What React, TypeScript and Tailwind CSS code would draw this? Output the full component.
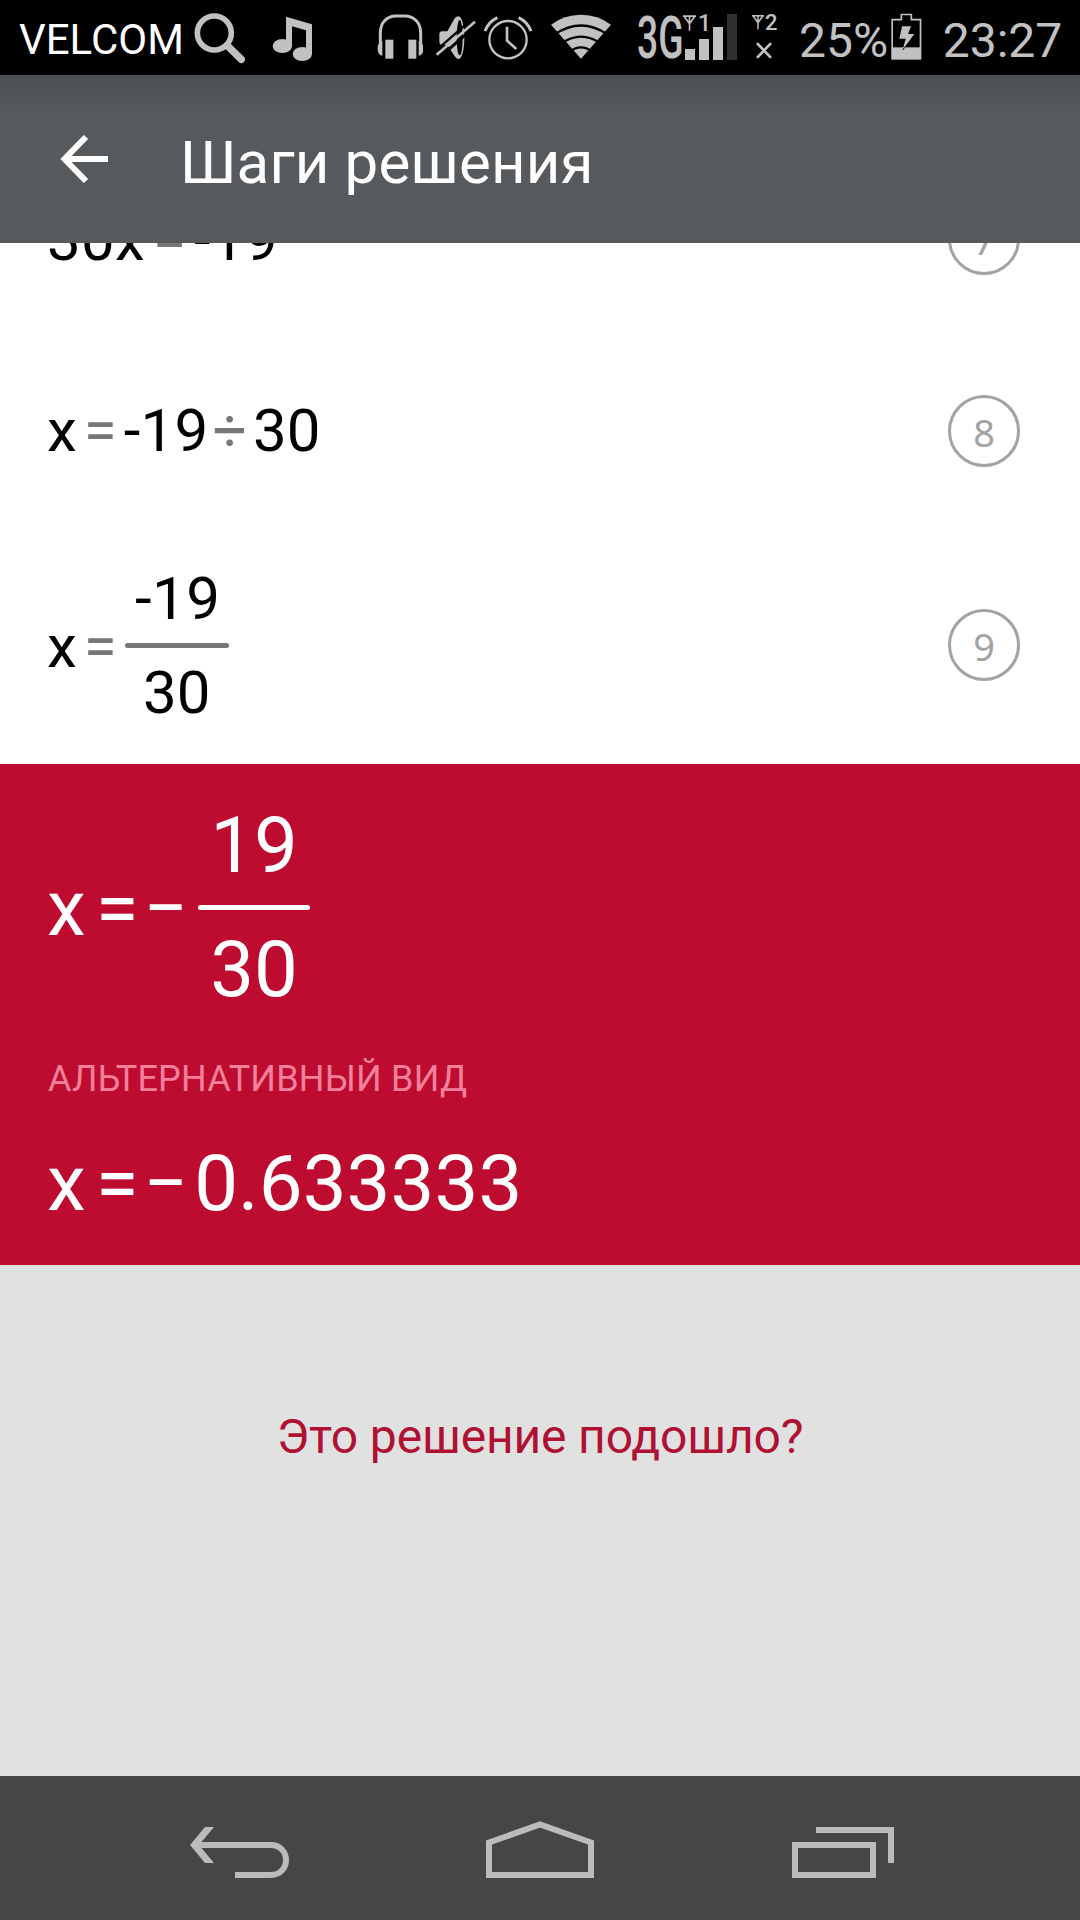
import React from 'react'

interface StepRowProps {
  step: number
  className?: string
  children: React.ReactNode
}

const ICON = '#c1c1c1'

const Antenna: React.FC<{ className?: string }> = ({ className = '' }) => (
  <svg viewBox="0 0 40 48" className={className} fill="none" stroke={ICON} strokeWidth="5">
    <path d="M0 3H40M20 3V48M4 4L19 25M36 4L21 25" />
  </svg>
)

const StatusBar = () => (
  <div className="flex h-[75px] shrink-0 items-start bg-black text-[#c1c1c1]">
    <span className="ml-[19px] mt-[16px] w-[163px] whitespace-nowrap text-[42px] leading-[48px] text-white">VELCOM</span>

    {/* search */}
    <svg viewBox="580 36 160 156" className="ml-[11px] mt-3 h-[52px] w-[53.3px] shrink-0" fill="none" stroke={ICON}>
      <circle cx="644" cy="99" r="51" strokeWidth="17" />
      <path d="M683 137L725 178" strokeWidth="22" strokeLinecap="round" />
    </svg>

    {/* music */}
    <svg viewBox="816 48 126 138" className="ml-[25.7px] mt-4 h-[46px] w-[42px] shrink-0" fill={ICON}>
      <path d="M858 50L936 73V162H918V91L876 79V138H858Z" />
      <ellipse cx="847" cy="138" rx="29" ry="21" />
      <ellipse cx="907" cy="162" rx="29" ry="21" />
    </svg>

    {/* headphones */}
    <svg viewBox="50 40 140 140" className="ml-[62.7px] mt-[13.3px] h-[46.7px] w-[46.7px] shrink-0">
      <path d="M60 135V100C60 66 82 49 106 49H134C158 49 181 66 181 100V135" fill="none" stroke={ICON} strokeWidth="9" />
      <path d="M66 124V168C54 166 52 156 52 146C52 136 56 126 66 124ZM175 124V168C187 166 189 156 189 146C189 136 185 126 175 124Z" fill={ICON} />
      <rect x="75" y="120" width="24" height="57" fill={ICON} />
      <rect x="144" y="120" width="24" height="57" fill={ICON} />
    </svg>

    {/* muted speaker */}
    <svg viewBox="225 46 125 136" className="ml-[11.6px] mt-[15.3px] h-[45.3px] w-[41.7px] shrink-0">
      <path d="M238 104Q238 96 246 95H262L284 56Q289 50 295 50C306 50 313 78 313 114C313 150 306 178 295 178Q289 178 284 170L262 136H246Q238 135 238 126Z" fill={ICON} />
      <ellipse cx="299" cy="114" rx="9" ry="53" fill="black" />
      <path d="M222 158L338 56" stroke="black" strokeWidth="7" />
      <path d="M238 174L352 74" stroke="black" strokeWidth="9" />
      <path d="M230 165L345 66" stroke={ICON} strokeWidth="8" />
    </svg>

    {/* alarm */}
    <svg viewBox="370 44 150 136" className="ml-[6.7px] mt-[14.7px] h-[45.3px] w-[50px] shrink-0" fill="none" stroke={ICON}>
      <circle cx="445" cy="118" r="56" strokeWidth="7" />
      <path d="M376 92Q387 64 413 52M514 92Q503 64 477 52" strokeWidth="9" />
      <path d="M442 79V121L470 146" strokeWidth="8" />
    </svg>

    {/* wifi */}
    <svg viewBox="570 40 186 140" className="ml-[16.7px] mt-[13.3px] h-[46.7px] w-[62px] shrink-0">
      <path d="M663 177L573 75Q612 45 663 45Q714 45 753 75Z" fill={ICON} />
      <path d="M584 104Q663 51 742 104M606 130Q663 92 720 130M630 155Q663 131 696 155" fill="none" stroke="black" strokeWidth="7" />
    </svg>

    <span className="ml-[25px] mt-[8px] w-[44px] origin-left scale-x-[0.62] whitespace-nowrap text-[60px] font-medium leading-[60px]">3G</span>

    {/* first SIM signal */}
    <div className="relative ml-[4px] mt-[14px] flex h-[46px] w-[54px] shrink-0 items-end gap-1">
      <div className="h-[11px] w-[10px] bg-[#c1c1c1]" />
      <div className="h-[21px] w-[10px] bg-[#c1c1c1]" />
      <div className="h-[33px] w-[10px] bg-[#c1c1c1]" />
      <div className="h-[46px] w-[10px] bg-[#303030]" />
      <Antenna className="absolute -left-[2px] top-[1px] h-4 w-[13px]" />
      <span className="absolute left-[13px] -top-[2px] text-[23px] font-medium leading-[23px]">1</span>
    </div>

    {/* second SIM signal */}
    <div className="ml-[13px] mt-[14px] flex w-[27px] shrink-0 flex-col">
      <div className="flex h-[18px] items-start">
        <Antenna className="h-4 w-[12px]" />
        <span className="ml-[1px] -mt-[3px] text-[22px] font-medium leading-[23px]">2</span>
      </div>
      <svg viewBox="0 0 48 50" className="ml-1 mt-[10px] h-[17px] w-4" stroke={ICON} strokeWidth="8">
        <path d="M3 3L45 47M45 3L3 47" />
      </svg>
    </div>

    <span className="ml-[20px] mt-[13px] w-[88px] whitespace-nowrap text-[48px] leading-[56px]">25%</span>

    {/* battery */}
    <svg viewBox="512 38 92 141" className="ml-[4px] mt-[12.7px] h-[47px] w-[30.7px] shrink-0">
      <path d="M515.500 58H543V42.500H573V58H600.500V175H515.500Z" fill="none" stroke={ICON} strokeWidth="5" />
      <rect x="514" y="141" width="88" height="36" fill={ICON} />
      <path d="M545 78H572L563 101H582L547 148L556 115H537Z" fill={ICON} />
      <path d="M553 141L547 149" stroke="black" strokeWidth="3" />
    </svg>

    <span className="ml-[21px] mt-[13px] whitespace-nowrap text-[48px] leading-[56px]">23:27</span>
  </div>
)

const Operator: React.FC<{ children: React.ReactNode }> = ({ children }) => (
  <span className="mx-[6px] text-[#777]">{children}</span>
)

const Fraction: React.FC<{ top: React.ReactNode; bottom: string; bar: string; className?: string }> = ({
  top,
  bottom,
  bar,
  className = ''
}) => (
  <div className={`flex flex-col items-center ${className}`}>
    <span>{top}</span>
    <div className={`h-[5px] w-full rounded-full ${bar}`} />
    <span>{bottom}</span>
  </div>
)

const StepRow: React.FC<StepRowProps> = ({ step, className = '', children }) => (
  <div className={`flex shrink-0 items-center justify-between pl-[47px] pr-[60px] ${className}`}>
    <div className="flex items-center text-[60px] leading-[70px] text-black">{children}</div>
    <div className="flex h-[72px] w-[72px] items-center justify-center rounded-full border-[3px] border-[#a3a3a3] pt-[1px] font-['Noto_Sans',sans-serif] text-[38px] leading-none text-[#a3a3a3]">
      {step}
    </div>
  </div>
)

const NavBar = () => (
  <div className="flex h-36 shrink-0 items-start bg-[#464646] pl-[190px]">
    <svg viewBox="0 0 99 51" className="mt-[51px] h-[51px] w-[99px]">
      <path d="M8 18H81C90 18 96 25 96 33C96 41 90 48 81 48H45" fill="none" stroke="#bbb" strokeWidth="6" />
      <path d="M0 18L15 0H24L9 18L24 36H15Z" fill="#bbb" />
    </svg>
    <svg viewBox="0 0 108 57" className="ml-[197px] mt-[45px] h-[57px] w-[108px]" fill="none" stroke="#bbb" strokeWidth="6">
      <path d="M3 54V21.500L54 3.500L105 21.500V54Z" />
    </svg>
    <svg viewBox="0 0 102 51" className="ml-[198px] mt-[51px] h-[51px] w-[102px]" fill="none" stroke="#bbb" strokeWidth="6">
      <path d="M3 18H81V48H3ZM24 3H99V36" />
    </svg>
  </div>
)

export default function App() {
  return (
    <div className="flex h-[1920px] w-[1080px] flex-col overflow-hidden bg-white font-[Roboto,sans-serif]">
      <StatusBar />

      <header className="z-10 flex h-[168px] shrink-0 items-center bg-[#565a5d] bg-linear-to-b from-[#4b5053] to-[#565a5d] to-20% pl-[60px] pt-[7px]">
        <svg viewBox="0 0 48 48" className="-mt-[7px] h-12 w-12" fill="none" stroke="white" strokeWidth="6">
          <path d="M48 24H5M26 2L4.500 24L26 46" />
        </svg>
        <h1 className="ml-[72px] text-[60px] leading-[70px] tracking-[0.15px] text-white">Шаги решения</h1>
      </header>

      <main className="flex h-[521px] shrink-0 flex-col justify-end overflow-hidden">
        <StepRow step={7} className="h-48">
          <span className="mr-[2px] mt-[2px] tracking-[0.3px]">30x</span>
          <Operator>=</Operator>
          <span className="ml-[2px] mt-[2px]">-19</span>
        </StepRow>
        <StepRow step={8} className="h-48">
          <span className="mr-px">x</span>
          <Operator>=</Operator>
          <span className="ml-px -mr-[2px] tracking-[0.3px]">-19</span>
          <Operator>÷</Operator>
          <span>30</span>
        </StepRow>
        <StepRow step={9} className="h-[237px] pb-px">
          <div className="flex pt-[3px]">
            <span className="mr-px">x</span>
            <Operator>=</Operator>
          </div>
          <Fraction
            top={<span className="ml-[2px] tracking-[0.5px]">-19</span>}
            bottom="30"
            bar="bg-[#777]"
            className="ml-[2px] w-[104px] leading-[89px]"
          />
        </StepRow>
      </main>

      <section className="flex h-[501px] shrink-0 flex-col bg-[#be0b30] pl-[47px] text-[78px] leading-[90px] text-white">
        <div className="mt-[30px] flex h-[227px] items-center">
          <div className="flex pt-[2px]">
            <span>x</span>
            <span className="ml-[10px]">=</span>
            <span className="ml-[5px]">−</span>
          </div>
          <Fraction top="19" bottom="30" bar="bg-white" className="ml-[10px] w-[112px] leading-[119px]" />
        </div>
        <span className="ml-px mt-[37px] text-[36px] leading-[42px] tracking-[0.2px] text-[#f2809a]">АЛЬТЕРНАТИВНЫЙ ВИД</span>
        <div className="mt-[39px] flex items-center">
          <span>x</span>
          <span className="ml-[10px]">=</span>
          <span className="ml-[5px]">−</span>
          <span className="ml-[6px] tracking-[0.1px]">0.633333</span>
        </div>
      </section>

      <section className="flex flex-1 justify-center bg-[#e1e1e1] pt-[144px]">
        <button className="h-14 text-[48px] leading-[56px] tracking-[-0.15px] text-[#b01032]">Это решение подошло?</button>
      </section>

      <NavBar />
    </div>
  )
}
